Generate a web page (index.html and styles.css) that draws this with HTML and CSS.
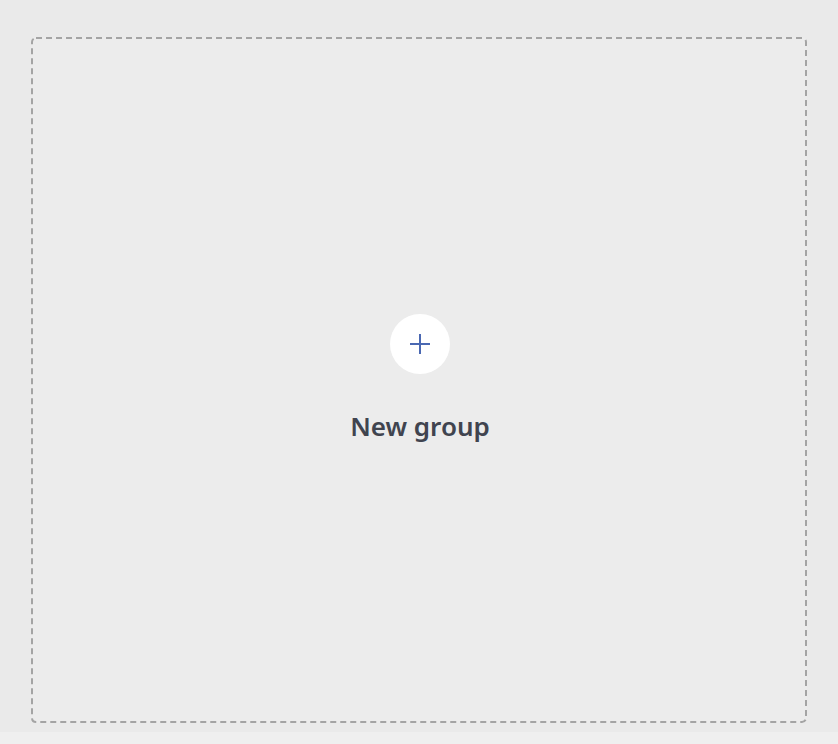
FILE: index.html
```html
<!doctype html>
<html lang="en">
  <head>
    <meta charset="UTF-8">
    <meta name="viewport" content="width=device-width, initial-scale=1.0">
    <title>Groups</title>
    <link rel="stylesheet" href="styles.css">
  </head>
  <body>
    <div class="page">
      <!-- Empty group placeholder -->
      <button class="new-group" type="button">
        <svg class="dash-frame" width="100%" height="100%">
          <rect x="1" y="1" width="774" height="684" rx="4" ry="4" fill="none" stroke="#a4a4a4" stroke-width="2" stroke-dasharray="6 4"/>
        </svg>
        <span class="add-circle">
          <svg width="22" height="22" viewBox="0 0 22 22">
            <path d="M11 1 V21 M1 11 H21" stroke="#4a68b2" stroke-width="2" fill="none"/>
          </svg>
        </span>
        <span class="new-group-label">New group</span>
      </button>
    </div>
    <div class="footer-strip"></div>
  </body>
</html>
```

FILE: styles.css
```css
html, body {
  margin: 0;
  padding: 0;
  background-color: #eaeaea;
  font-family: "Noto Sans", "Open Sans", Arial, sans-serif;
}
.page {
  padding: 37px 31px 9px 31px;
}
.new-group {
  position: relative;
  width: 100%;
  height: 686px;
  box-sizing: border-box;
  border: none;
  border-radius: 5px;
  background-color: #ececec;
  display: flex;
  flex-direction: column;
  align-items: center;
  justify-content: center;
  gap: 34px;
  padding: 0 0 2px 2px;
  cursor: pointer;
  font-family: inherit;
}
.dash-frame {
  position: absolute;
  top: 0;
  left: 0;
}
.add-circle {
  width: 60px;
  height: 60px;
  border-radius: 50%;
  background-color: #ffffff;
  display: flex;
  align-items: center;
  justify-content: center;
}
.new-group-label {
  font-size: 26px;
  font-weight: 600;
  color: #40444f;
  line-height: 36px;
}
.footer-strip {
  height: 13px;
  background-color: #efefef;
}
```
